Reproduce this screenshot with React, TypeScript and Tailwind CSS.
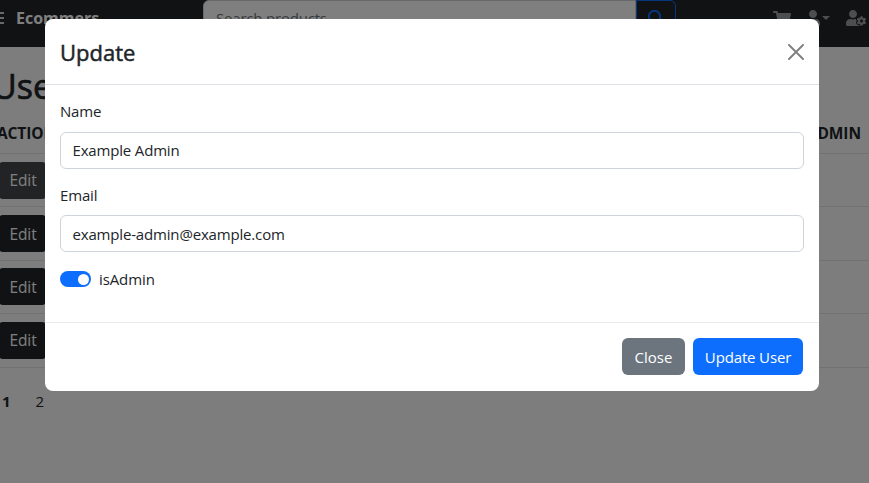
import { FaShoppingCart, FaUser, FaUserCog } from "react-icons/fa";

const rows = [
  { id: 1, hovered: true },
  { id: 2, hovered: false },
  { id: 3, hovered: false },
  { id: 4, hovered: false },
];

function Navbar() {
  return (
    <nav className="flex h-[47px] shrink-0 items-start bg-[#212529] text-white/55">
      <div className="mt-[12px] flex h-[12px] w-[4px] shrink-0 flex-col justify-between">
        <span className="h-[2px] bg-white/80" />
        <span className="h-[2px] bg-white/80" />
        <span className="h-[2px] bg-white/80" />
      </div>
      <span className="ml-[12px] mt-[6px] w-[187px] shrink-0 text-[16px] font-bold leading-6 text-white">
        Ecommers
      </span>
      <form className="flex w-[473px] shrink-0">
        <div className="h-[38px] w-[433px] rounded-l-md border border-[#ced4da] bg-white px-3 py-[5px] text-[15px] leading-6 tracking-[-0.2px] text-[#6c757d]">
          Search products
        </div>
        <div className="flex h-[38px] w-10 justify-center rounded-r-md border border-[#0d6efd] pt-[9px] text-[#0d6efd]">
          <svg className="h-4 w-4" viewBox="0 0 16 16" fill="none" stroke="currentColor" strokeWidth="1.9">
            <circle cx="6.5" cy="6.5" r="5.7" />
            <path d="m10.6 10.6 4.5 4.5" />
          </svg>
        </div>
      </form>
      <FaShoppingCart className="ml-[97px] mt-[10px] shrink-0" size={18} />
      <FaUser className="ml-[13.5px] mt-[10px] shrink-0" size={16} />
      <span className="ml-[1.5px] mt-[16px] h-0 w-0 shrink-0 border-x-[4px] border-t-[4px] border-x-transparent border-t-white/55" />
      <FaUserCog className="ml-[16px] mt-[10px] h-4 w-5 shrink-0" />
    </nav>
  );
}

function UsersPage() {
  return (
    <main className="text-[#212529]">
      <h1 className="-ml-[8px] mt-[15px] h-[49px] text-[34px] font-normal leading-[48px] [-webkit-text-stroke:0.7px_currentColor]">Users</h1>
      <div className="flex h-[43px] items-center justify-between border-b border-[#dee2e6] pr-2 pt-[4px] text-[15.5px] font-bold text-[#212529]">
        <span className="-ml-[3px] tracking-[-0.1px]">ACTIONS</span>
        <span className="tracking-[-0.05px]">ADMIN</span>
      </div>
      {rows.map((row) => (
        <div key={row.id} className="flex h-[53.4px] items-center border-b border-[#e4e4e4]">
          <button
            className={`-ml-px h-[37px] w-[47px] rounded pl-px text-[15.5px] leading-6 tracking-[-0.1px] text-white ${
              row.hovered ? "bg-[#424649]" : "bg-[#212529]"
            }`}
          >
            Edit
          </button>
        </div>
      ))}
      <div className="mt-[21px] flex gap-[25px] pl-[2px] text-[15px] leading-6">
        <b>1</b>
        <span>2</span>
      </div>
    </main>
  );
}

function Field({ label, value }: { label: string; value: string }) {
  return (
    <label className="mb-[15px] block text-[15px] leading-6">
      <span className="mb-[8.5px] block h-[23px] leading-[23px] tracking-[-0.17px]">{label}</span>
      <input
        defaultValue={value}
        className="block h-[37px] w-full rounded-md border border-[#ced4da] px-[11.5px] tracking-[-0.17px] outline-none"
      />
    </label>
  );
}

function UpdateModal() {
  return (
    <section className="flex h-[371.5px] w-[774px] flex-col rounded-lg bg-white text-[#212529]">
      <header className="flex h-[66px] items-center justify-between border-b border-[#dee2e6] px-[15px]">
        <h2 className="pt-px text-[22px] font-normal leading-8 [-webkit-text-stroke:0.5px_currentColor]">Update</h2>
        <svg className="h-4 w-4 text-black/50" viewBox="0 0 16 16" fill="none" stroke="currentColor" strokeWidth="1.9" strokeLinecap="round">
          <path d="M1 1 15 15M15 1 1 15" />
        </svg>
      </header>
      <div className="h-[237px] pl-[15px] pr-[15.5px] pt-[15px]">
        <Field label="Name" value="Example Admin" />
        <Field label="Email" value="example-admin@example.com" />
        <div className="flex items-center gap-2 text-[15px] leading-6">
          <span className="flex h-4 w-[31px] items-center justify-end rounded-full bg-[#0d6efd] pr-[2.5px]">
            <span className="h-[11px] w-[11px] rounded-full bg-white" />
          </span>
          <span className="tracking-[-0.1px]">isAdmin</span>
        </div>
      </div>
      <footer className="flex flex-1 items-center justify-end gap-2 border-t border-[#e9ecef] pl-[15px] pr-4 text-[15px] leading-6 text-white">
        <button className="h-[37px] w-[63px] rounded-md bg-[#6c757d]">Close</button>
        <button className="h-[37px] w-[110px] rounded-md bg-[#0d6efd] tracking-[-0.15px]">Update User</button>
      </footer>
    </section>
  );
}

export default function App() {
  return (
    <div className="relative h-[483px] w-[869px] overflow-hidden bg-[#fafafa] font-['Open_Sans','Noto_Sans',sans-serif]">
      <Navbar />
      <UsersPage />
      <div className="absolute inset-0 flex items-start bg-black/50 pl-[45px] pt-[19px]">
        <UpdateModal />
      </div>
    </div>
  );
}
